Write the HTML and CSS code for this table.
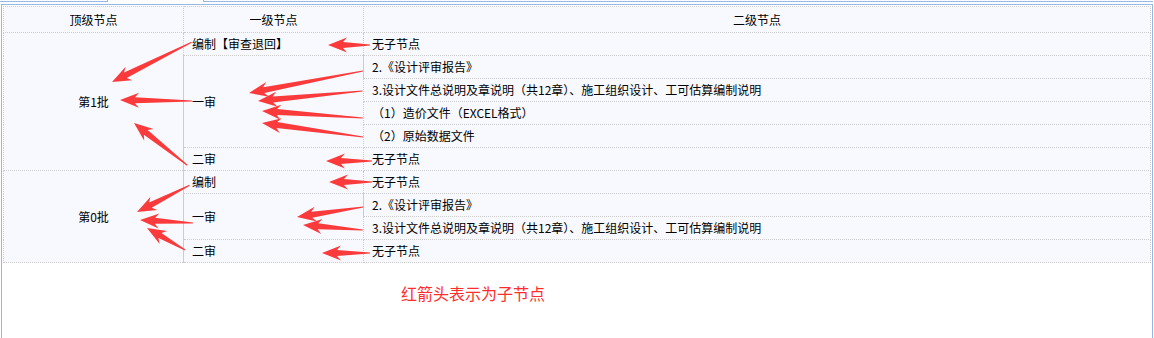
FILE: index.html
```html
<!DOCTYPE html>
<html lang="zh-CN">
<head>
<meta charset="utf-8">
<title>节点</title>
<link rel="stylesheet" href="styles.css">
</head>
<body>
<div class="top">
  <div class="tbox tbox-a"></div>
  <div class="tbox tbox-b"></div>
</div>
<div class="panel">
  <table class="grid">
    <colgroup><col class="c1"><col class="c2"><col class="c3"></colgroup>
    <thead>
      <tr><th>顶级节点</th><th>一级节点</th><th>二级节点</th></tr>
    </thead>
    <tbody>
      <tr><td rowspan="6" class="lvl0">第1批</td><td>编制【审查退回】</td><td>无子节点</td></tr>
      <tr><td rowspan="4" class="solid-l">一审</td><td class="solid-l">2.《设计评审报告》</td></tr>
      <tr><td>3.设计文件总说明及章说明（共12章）、施工组织设计、工可估算编制说明</td></tr>
      <tr><td>（1）造价文件（EXCEL格式）</td></tr>
      <tr><td>（2）原始数据文件</td></tr>
      <tr><td class="solid-l">二审</td><td>无子节点</td></tr>
      <tr><td rowspan="4" class="lvl0">第0批</td><td class="solid-l">编制</td><td>无子节点</td></tr>
      <tr><td rowspan="2" class="solid-l">一审</td><td class="solid-l">2.《设计评审报告》</td></tr>
      <tr><td>3.设计文件总说明及章说明（共12章）、施工组织设计、工可估算编制说明</td></tr>
      <tr><td class="solid-l">二审</td><td>无子节点</td></tr>
    </tbody>
  </table>
  <p class="note">红箭头表示为子节点</p>
</div>
<svg class="arrows" width="1154" height="338" viewBox="0 0 1154 338" aria-hidden="true">
  <g class="arrow-set">
    <path transform="translate(112 82) rotate(-26.57)" d="M0 0 L19 -7.5 L15 -3 L89 -0.5 L89 0.5 L15 3 L19 7.5 Z"/>
    <path transform="translate(120 100) rotate(0.8)" d="M0 0 L19 -7.5 L15 -3 L72 -0.5 L72 0.5 L15 3 L19 7.5 Z"/>
    <path transform="translate(134 123) rotate(38.4)" d="M0 0 L19 -7.5 L15 -3 L68 -0.5 L68 0.5 L15 3 L19 7.5 Z"/>
    <path transform="translate(328 45) rotate(0)" d="M0 0 L19 -7.5 L15 -3 L42 -0.5 L42 0.5 L15 3 L19 7.5 Z"/>
    <path transform="translate(249 93) rotate(-10.92)" d="M0 0 L19 -7.5 L15 -3 L116 -0.5 L116 0.5 L15 3 L19 7.5 Z"/>
    <path transform="translate(258 101) rotate(-5.44)" d="M0 0 L19 -7.5 L15 -3 L105 -0.5 L105 0.5 L15 3 L19 7.5 Z"/>
    <path transform="translate(262 111) rotate(3.96)" d="M0 0 L19 -7.5 L15 -3 L101 -0.5 L101 0.5 L15 3 L19 7.5 Z"/>
    <path transform="translate(262 123) rotate(7.89)" d="M0 0 L19 -7.5 L15 -3 L102 -0.5 L102 0.5 L15 3 L19 7.5 Z"/>
    <path transform="translate(326 161) rotate(0)" d="M0 0 L19 -7.5 L15 -3 L46 -0.5 L46 0.5 L15 3 L19 7.5 Z"/>
    <path transform="translate(329 182) rotate(0)" d="M0 0 L19 -7.5 L15 -3 L43 -0.5 L43 0.5 L15 3 L19 7.5 Z"/>
    <path transform="translate(137 212) rotate(-27)" d="M0 0 L19 -7.5 L15 -3 L59 -0.5 L59 0.5 L15 3 L19 7.5 Z"/>
    <path transform="translate(140 220) rotate(3.24)" d="M0 0 L19 -7.5 L15 -3 L53 -0.5 L53 0.5 L15 3 L19 7.5 Z"/>
    <path transform="translate(147 228) rotate(30.07)" d="M0 0 L19 -7.5 L15 -3 L44 -0.5 L44 0.5 L15 3 L19 7.5 Z"/>
    <path transform="translate(297 217) rotate(-8.62)" d="M0 0 L19 -7.5 L15 -3 L67 -0.5 L67 0.5 L15 3 L19 7.5 Z"/>
    <path transform="translate(303 225) rotate(4.76)" d="M0 0 L19 -7.5 L15 -3 L60 -0.5 L60 0.5 L15 3 L19 7.5 Z"/>
    <path transform="translate(322 253) rotate(0)" d="M0 0 L19 -7.5 L15 -3 L48 -0.5 L48 0.5 L15 3 L19 7.5 Z"/>
  </g>
</svg>
</body>
</html>
```

FILE: styles.css
```css
html, body {
  margin: 0;
  padding: 0;
  background: #ffffff;
}
body {
  position: relative;
  width: 1154px;
  height: 338px;
  overflow: hidden;
  font-family: "Noto Sans CJK SC", "Noto Sans", sans-serif;
  font-size: 12px;
  color: #000000;
}
.top {
  display: flex;
  height: 4px;
}
.tbox {
  height: 1px;
  border-bottom: 1px solid #95b8e7;
}
.tbox-a {
  width: 107px;
  border-right: 1px solid #95b8e7;
}
.tbox-b {
  flex: 1;
  margin-left: 95px;
  margin-right: 1px;
  border-left: 1px solid #95b8e7;
}
.panel {
  box-sizing: border-box;
  width: 1152px;
  height: 334px;
  margin-left: 1px;
  padding: 1px;
  border: 1px solid #95b8e7;
  border-bottom: none;
}
.grid {
  width: 1148px;
  table-layout: fixed;
  border-collapse: collapse;
  background: #f8f9ff;
}
.grid .c1, .grid .c2 {
  width: 180px;
}
.grid th, .grid td {
  border: 1px dotted #cccccc;
  padding: 0 8px;
  line-height: 16px;
  white-space: nowrap;
  text-align: left;
  vertical-align: middle;
}
.grid th {
  height: 25px;
  font-weight: normal;
  text-align: center;
}
.grid td {
  height: 22px;
}
.grid td.lvl0 {
  text-align: center;
}
.grid td.solid-l {
  border-left: 1px solid #cccccc;
}
.note {
  margin: 20px 0 0 398px;
  font-size: 16px;
  line-height: 20px;
  color: #ff2d2d;
}
.arrows {
  position: absolute;
  left: 0;
  top: 0;
  pointer-events: none;
}
.arrow-set path {
  fill: #fb3b3b;
}
```
